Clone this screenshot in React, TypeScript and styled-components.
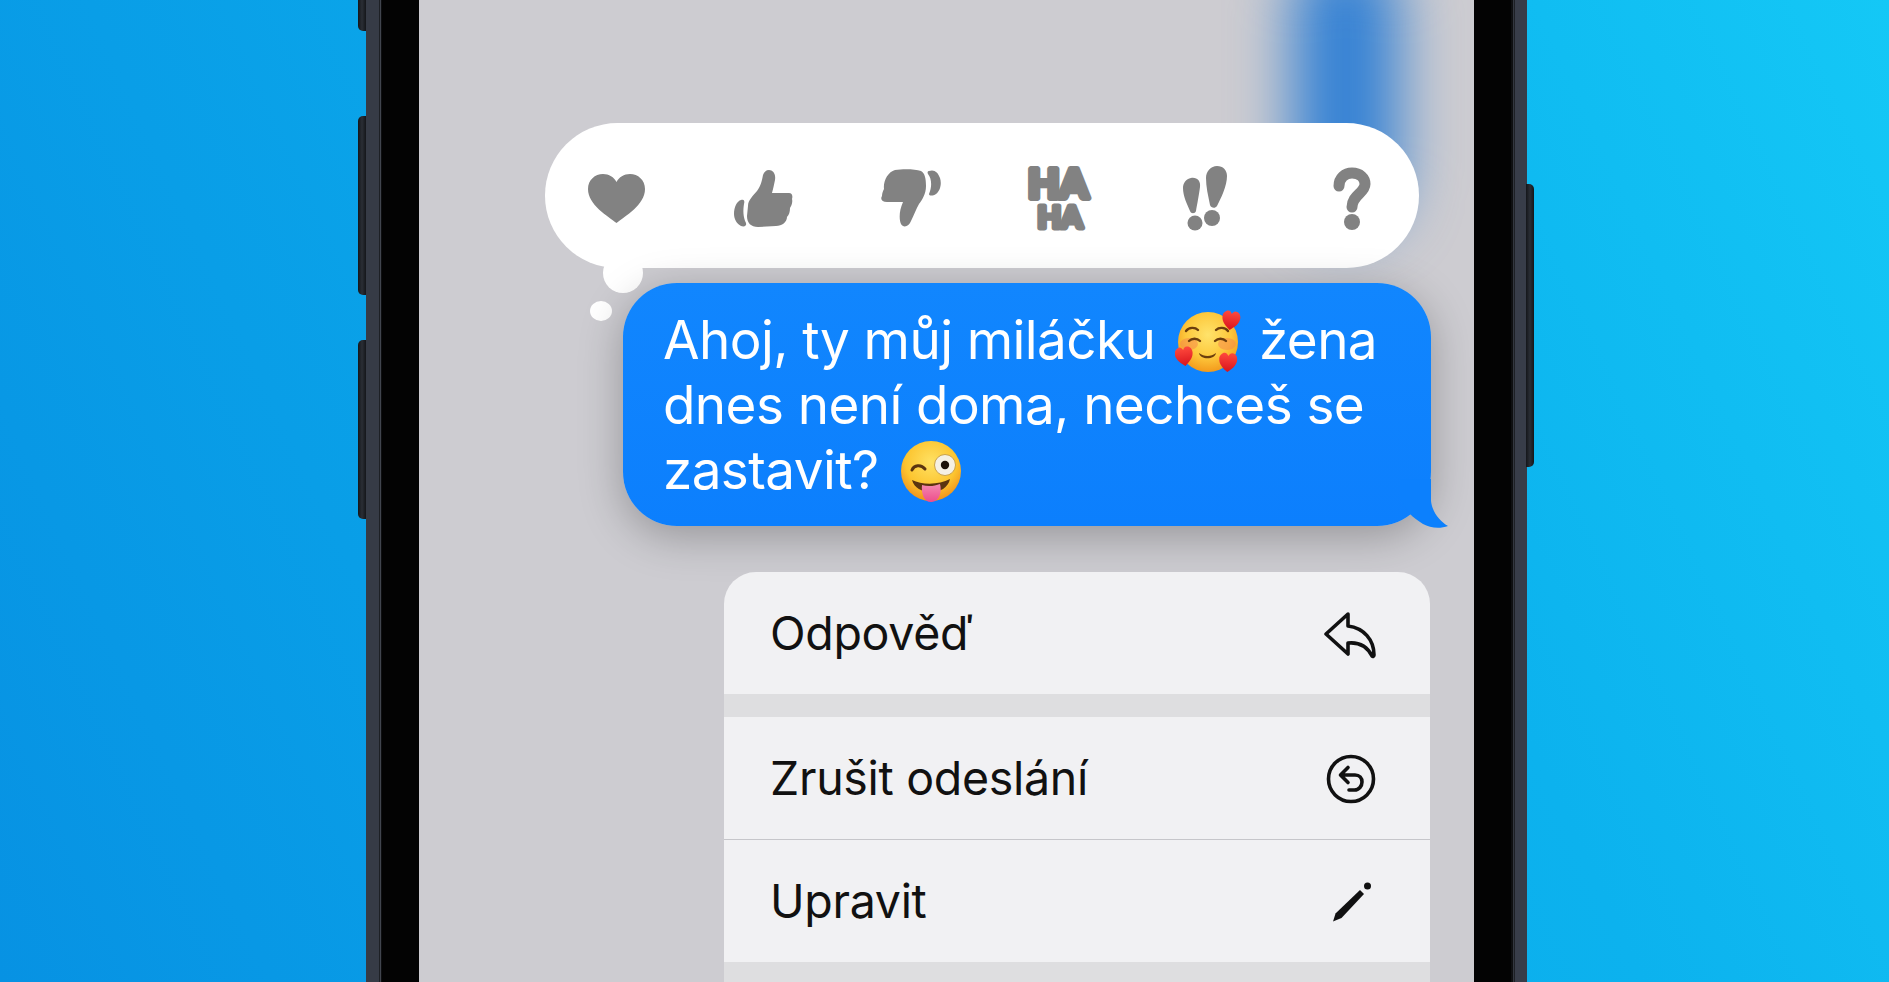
import React from "react";
import styled, { createGlobalStyle } from "styled-components";

const GREY = "#828282";

export default function App() {
  return (
    <Page>
      <GlobalStyle />
      <Phone>
        <SideButton $side="left" $top={-10} $height={41} />
        <SideButton $side="left" $top={116} $height={179} />
        <SideButton $side="left" $top={340} $height={179} />
        <SideButton $side="right" $top={184} $height={283} />
        <FrameEdge $side="left" />
        <Bezel />
        <Screen>
          <BlurBlob />
          <ReactionBar>
            <ReactionCell>
              <svg width="57" height="49" viewBox="0 0 57 49">
                <path
                  fill={GREY}
                  d="M28.5 49C20 42 0 31 0 15 0 6 7 0 15 0c6 0 11 3 13.5 8C31 3 36 0 42 0c8 0 15 6 15 15 0 16-20 27-28.5 34Z"
                />
              </svg>
            </ReactionCell>
            <ReactionCell>
              <svg width="59" height="57" viewBox="0 0 59 57">
                <g fill={GREY}>
                  <path d="M35 0c4 0 7 4 6 10-1 5-2 9-3 13h17c3 0 4 3 3 6 1 4-1 7-2 9 0 4-1 7-3 9 0 5-5 9-11 9l-18 1c-7 0-11-4-11-11l1-10c0-6 5-10 9-15s5-11 6-16c1-3 3-5 6-5Z" />
                  <path d="M7 30c3-1 4 1 3 4-1 6-1 13 2 19 1 3-2 4-5 3-4-2-7-7-7-12 0-7 3-13 7-14Z" />
                </g>
              </svg>
            </ReactionCell>
            <ReactionCell>
              <svg width="60" height="58" viewBox="0 0 60 58">
                <g fill={GREY}>
                  <path d="M14 1C22 0 34 0 40 2c4 2 5 8 5 15 0 8-4 14-7 18-3 5-5 11-8 17-2 6-8 7-10 3-2-5-2-13 2-22H6c-5 0-7-3-5-6 0-3 1-5 2-7C2 12 7 3 14 1Z" />
                  <path d="M48 2c5-2 9 1 11 7 2 6 0 13-4 16-3 2-7 2-7 0 3-7 3-15-1-20-1-2 0-3 1-3Z" />
                </g>
              </svg>
            </ReactionCell>
            <ReactionCell>
              <svg width="72" height="81" viewBox="0 -8 72 81">
                <HahaText
                  $stroke={6}
                  x="6"
                  y="32"
                  fontSize="40"
                  textLength="60"
                  lengthAdjust="spacingAndGlyphs"
                >
                  HA
                </HahaText>
                <HahaText
                  $stroke={5}
                  x="15.500"
                  y="62"
                  fontSize="30"
                  textLength="45"
                  lengthAdjust="spacingAndGlyphs"
                >
                  HA
                </HahaText>
              </svg>
            </ReactionCell>
            <ReactionCell>
              <svg width="46" height="65" viewBox="0 0 46 65">
                <g fill={GREY}>
                  <path d="M9 12c6-1 10 3 9 9-1 8-3 18-4 24-1 3-5 3-6 0C5 38 1 30 1 22c0-5 3-9 8-10Z" />
                  <circle cx="13" cy="57" r="7.5" />
                  <path d="M35 0c6 0 10 4 10 10 0 10-6 22-10 30-2 3-6 2-7-1-2-10-4-18-4-27 0-7 5-12 11-12Z" />
                  <circle cx="30" cy="52" r="8" />
                </g>
              </svg>
            </ReactionCell>
            <ReactionCell>
              <svg width="38" height="63" viewBox="0 0 38 63">
                <path
                  d="M6 19C6 11 12 6 19 6c8 0 13 5 13 11 0 9-13 11-13 23"
                  fill="none"
                  stroke={GREY}
                  strokeWidth="11"
                  strokeLinecap="round"
                />
                <circle cx="19" cy="55" r="8" fill={GREY} />
              </svg>
            </ReactionCell>
          </ReactionBar>
          <ThoughtDot $left={184} $top={253} $w={40} $h={40} />
          <ThoughtDot $left={171} $top={301} $w={22} $h={20} />
          <Bubble>
            Ahoj, ty můj miláčku <HeartsEmoji /> žena dnes není doma, nechceš se
            zastavit? <WinkEmoji />
            <BubbleTail viewBox="0 0 50 50" width="50" height="50">
              <path
                fill="#0c80fd"
                d="M31 0V22C32 32 39 42 48 47 40 50 30 49 23 45 18 42 13 38 10 35L0 20V0Z"
              />
            </BubbleTail>
          </Bubble>
          <Menu>
            <MenuRow>
              Odpověď
              <ReplyIcon width="54" height="48" viewBox="0 0 54 48">
                <path
                  fill="none"
                  stroke="#111"
                  strokeWidth="3.6"
                  strokeLinejoin="round"
                  d="M25 3 3 23l22 20V32c10-1 19 3 24 13 1 1 2 0 2-1 0-15-10-27-26-29Z"
                />
              </ReplyIcon>
            </MenuRow>
            <MenuGap />
            <MenuRow>
              Zrušit odeslání
              <UndoIcon width="50" height="50" viewBox="0 0 50 50">
                <g
                  fill="none"
                  stroke="#111"
                  strokeWidth="3.6"
                  strokeLinecap="round"
                  strokeLinejoin="round"
                >
                  <circle cx="25" cy="25" r="22.5" />
                  <path d="M22 13.5 14.5 21l7.5 7.5M15 21h14c4.500 0 7 3 7 7s-3 8-7.500 8H23" />
                </g>
              </UndoIcon>
            </MenuRow>
            <MenuLine />
            <MenuRow>
              Upravit
              <svg width="44" height="44" viewBox="0 0 44 44">
                <path d="M1 42.500 3.500 34.500 28 11 32 15 9.500 39Z" fill="#111" />
                <circle cx="35.500" cy="7" r="3.500" fill="#111" />
              </svg>
            </MenuRow>
            <MenuGap />
          </Menu>
        </Screen>
        <Bezel />
        <FrameEdge $side="right" />
      </Phone>
    </Page>
  );
}

function SmallHeart({ x, y, r = 0 }: { x: number; y: number; r?: number }) {
  return (
    <path
      transform={`translate(${x} ${y}) rotate(${r})`}
      fill="url(#heartFill)"
      d="M0 10C-4 7-9 3-9-3c0-3 3-6 5-6 2 0 3 1 4 3 1-2 2-3 4-3 3 0 5 3 5 6C9 3 4 7 0 10Z"
    />
  );
}

function HeartsEmoji() {
  return (
    <Emoji $before={5} $after={3} width="67" height="64" viewBox="0 0 67 64">
      <defs>
        <radialGradient id="faceA" cx="50%" cy="38%" r="62%">
          <stop offset="0%" stopColor="#ffe36b" />
          <stop offset="60%" stopColor="#fdc83c" />
          <stop offset="100%" stopColor="#f39a1c" />
        </radialGradient>
        <linearGradient id="heartFill" x1="0" y1="0" x2="0" y2="1">
          <stop offset="0%" stopColor="#ff4a3d" />
          <stop offset="100%" stopColor="#d8131d" />
        </linearGradient>
      </defs>
      <circle cx="33" cy="32" r="30" fill="url(#faceA)" />
      <ellipse cx="14" cy="34" rx="9" ry="6" fill="#f58a4b" opacity="0.55" />
      <ellipse cx="52" cy="34" rx="9" ry="6" fill="#f58a4b" opacity="0.55" />
      <g fill="none" stroke="#6b3d0d" strokeWidth="2.4" strokeLinecap="round">
        <path d="M11 21c3-4 9-4 12-1" />
        <path d="M41 20c3-3 9-3 12 1" />
        <path d="M14 31c3-3 8-3 11 0" />
        <path d="M40 31c3-3 8-3 11 0" />
      </g>
      <path d="M24 43c5 4 12 4 17 0-1 7-16 7-17 0Z" fill="#6b3d0d" />
      <SmallHeart x={56} y={10} r={8} />
      <SmallHeart x={9} y={46} r={-8} />
      <SmallHeart x={53} y={52} r={4} />
    </Emoji>
  );
}

function WinkEmoji() {
  return (
    <Emoji $before={8} $after={0} width="60" height="64" viewBox="0 0 60 64">
      <defs>
        <radialGradient id="faceB" cx="50%" cy="35%" r="65%">
          <stop offset="0%" stopColor="#ffe163" />
          <stop offset="65%" stopColor="#fcc530" />
          <stop offset="100%" stopColor="#f0921a" />
        </radialGradient>
        <linearGradient id="tongue" x1="0" y1="0" x2="0" y2="1">
          <stop offset="0%" stopColor="#f58ab0" />
          <stop offset="100%" stopColor="#ec4c8c" />
        </linearGradient>
      </defs>
      <circle cx="30" cy="31" r="30" fill="url(#faceB)" />
      <path
        d="M11 30c2-5 9-6 13-1"
        fill="none"
        stroke="#5b3410"
        strokeWidth="3"
        strokeLinecap="round"
      />
      <circle cx="44" cy="25" r="10.500" fill="#f5f0e4" stroke="#c9a24b" strokeWidth="1" />
      <circle cx="44" cy="25" r="4.200" fill="#1c1209" />
      <path d="M11 40c10 5 27 5 38-1-2 9-10 13-19 13S13 48 11 40Z" fill="#5b3410" />
      <path
        d="M21 45c6 2 13 1 18-1 2 7 0 17-8 18-8 1-11-9-10-17Z"
        fill="url(#tongue)"
      />
    </Emoji>
  );
}

const GlobalStyle = createGlobalStyle`
  html, body {
    margin: 0;
    padding: 0;
  }
`;

const Page = styled.div`
  width: 100vw;
  height: 100vh;
  overflow: hidden;
  display: flex;
  padding-left: 366px;
  box-sizing: border-box;
  background: linear-gradient(65deg, #0792e3 0%, #0aa4e9 35%, #0cb2ee 70%, #14c8f6 100%);
  font-family: Inter, "Liberation Sans", sans-serif;
`;

const Phone = styled.div`
  position: relative;
  width: 1161px;
  height: 982px;
  display: flex;
  flex: none;
`;

const SideButton = styled.div<{ $side: "left" | "right"; $top: number; $height: number }>`
  position: absolute;
  top: ${(p) => p.$top}px;
  height: ${(p) => p.$height}px;
  width: 8px;
  ${(p) => (p.$side === "left" ? "left: -8px;" : "right: -7px;")}
  border-radius: ${(p) => (p.$side === "left" ? "5px 0 0 5px" : "0 5px 5px 0")};
  background: linear-gradient(90deg, #14161a, #2a2e35 50%, #14161a);
`;

const FrameEdge = styled.div<{ $side: "left" | "right" }>`
  flex: none;
  width: 16px;
  background: ${(p) =>
    p.$side === "left"
      ? "linear-gradient(90deg, #363b46 0 13px, #1d2025 13px 14px, #41454e 14px 15px, #0e0f11 15px)"
      : "linear-gradient(90deg, #0e0f11 0 2px, #33373f 2px 3px, #1d2025 3px 4px, #383d49 4px)"};
`;

const Bezel = styled.div`
  flex: none;
  width: 37px;
  background: #030303;
`;

const Screen = styled.div`
  position: relative;
  width: 1055px;
  height: 982px;
  flex: none;
  overflow: hidden;
  padding-top: 123px;
  box-sizing: border-box;
  background: #cdccd1;
`;

const BlurBlob = styled.div`
  position: absolute;
  left: 874px;
  top: -50px;
  width: 106px;
  height: 280px;
  border-radius: 53px;
  background: #3381d4;
  filter: blur(30px);
`;

const ReactionBar = styled.div`
  position: relative;
  margin-left: 126px;
  width: 874px;
  height: 145px;
  box-sizing: border-box;
  padding-left: 4px;
  display: flex;
  justify-content: center;
  align-items: center;
  border-radius: 73px;
  background: #fff;
`;

const ReactionCell = styled.div`
  flex: none;
  width: 147px;
  height: 100px;
  display: flex;
  justify-content: center;
  align-items: center;
  margin-top: 5px;
`;

const HahaText = styled.text<{ $stroke: number }>`
  font-family: Lato, sans-serif;
  font-weight: 900;
  fill: ${GREY};
  stroke: ${GREY};
  stroke-width: ${(p) => p.$stroke}px;
  stroke-linejoin: round;
`;

const ThoughtDot = styled.div<{ $left: number; $top: number; $w: number; $h: number }>`
  position: absolute;
  left: ${(p) => p.$left}px;
  top: ${(p) => p.$top}px;
  width: ${(p) => p.$w}px;
  height: ${(p) => p.$h}px;
  border-radius: 50%;
  background: #fff;
`;

const Bubble = styled.div`
  position: relative;
  margin: 15px 0 46px 204px;
  width: 808px;
  height: 243px;
  box-sizing: border-box;
  padding: 25px 30px 0 40px;
  border-radius: 54px;
  background: linear-gradient(180deg, #1186fe, #0c7ffd);
  box-shadow: 0 10px 44px rgba(0, 0, 0, 0.27);
  color: #fff;
  font-size: 53px;
  line-height: 65px;
  letter-spacing: -0.58px;
`;

const BubbleTail = styled.svg`
  position: absolute;
  right: -19px;
  bottom: -3px;
`;

const Emoji = styled.svg<{ $before: number; $after: number }>`
  display: inline-block;
  vertical-align: middle;
  margin: -12px ${(p) => p.$after}px -6px ${(p) => p.$before}px;
`;

const ReplyIcon = styled.svg`
  margin: 3px -1px 0 0;
`;

const UndoIcon = styled.svg`
  margin-top: 1px;
`;

const Menu = styled.div`
  position: relative;
  margin-left: 305px;
  width: 706px;
  border-radius: 32px 32px 0 0;
  overflow: hidden;
  background: #f1f1f3;
`;

const MenuRow = styled.div`
  height: 122px;
  box-sizing: border-box;
  padding: 0 54px 0 46px;
  display: flex;
  justify-content: space-between;
  align-items: center;
  color: #111;
  font-size: 46.500px;
  letter-spacing: -0.3px;
`;

const MenuGap = styled.div`
  height: 23px;
  background: #dedee0;
`;

const MenuLine = styled.div`
  height: 1px;
  background: #c6c6ca;
`;
